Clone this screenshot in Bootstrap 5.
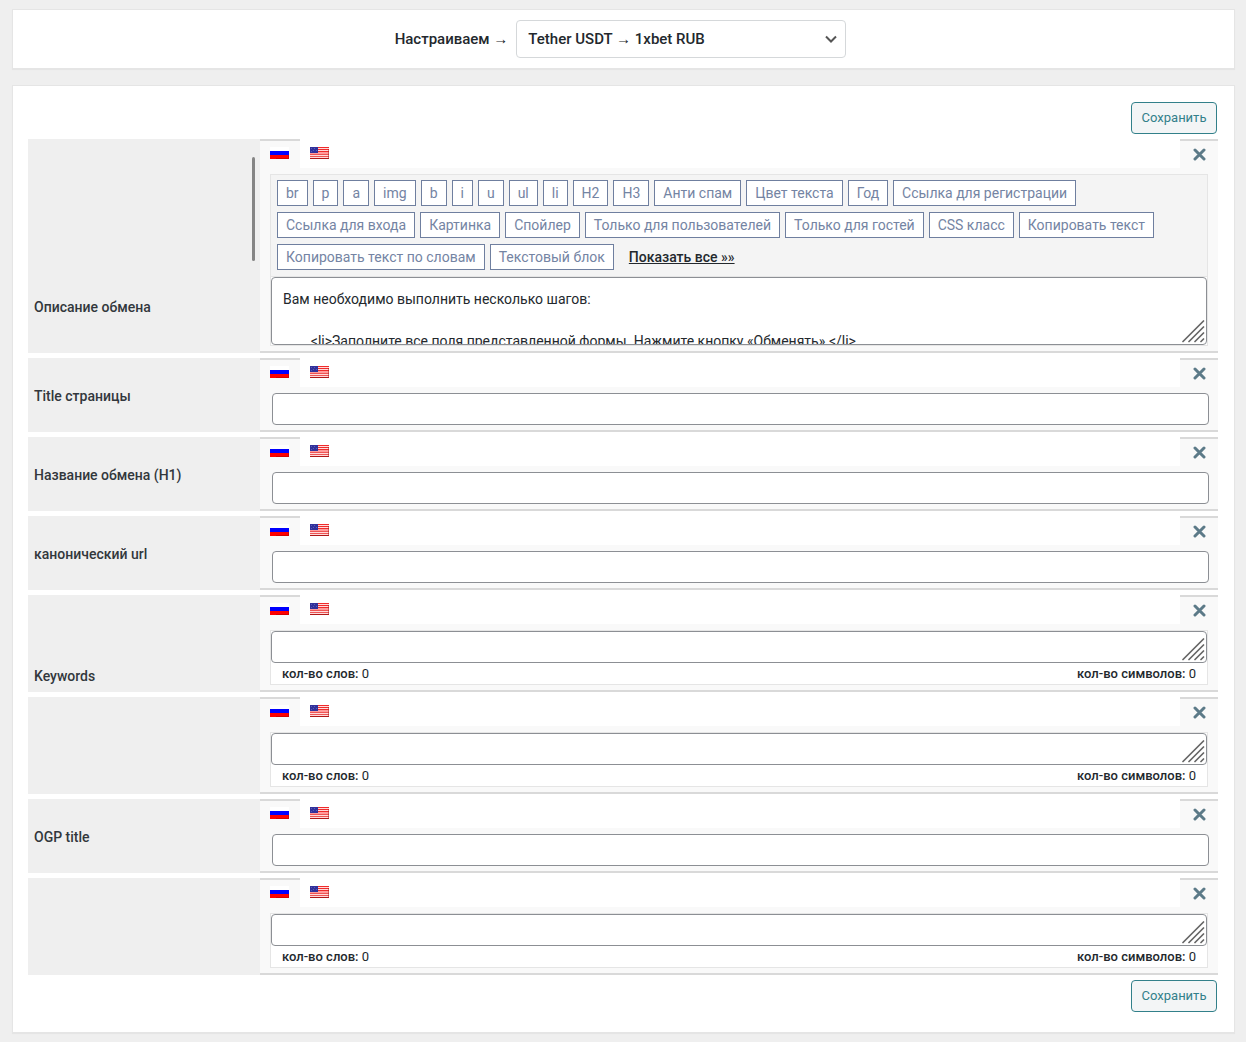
<!DOCTYPE html>
<html lang="ru">
<head>
<meta charset="utf-8">
<meta name="viewport" content="width=device-width, initial-scale=1">
<title>Настройки направления обмена</title>
<link href="https://cdn.jsdelivr.net/npm/bootstrap@5.3.0/dist/css/bootstrap.min.css" rel="stylesheet">
<style>
body{background:#efefef;color:#32373c;font:14px/20px Roboto,"Liberation Sans",sans-serif}
.page-wrap{padding:9px 11px 9px 12px}
.panel{background:#fff;border:1px solid #e5e5e5;box-shadow:0 1px 1px rgba(0,0,0,.04)}
.panel-head{padding:10px 6px 10px 0;margin-bottom:16px}
.panel-main{padding:16px 16px 20px 15px}
.pick-label{font-size:15px;font-weight:500;margin-right:8px;color:#23282d}
.pick-select{width:330px;height:38px;border:1px solid #d5d8da;border-radius:4px;font-size:15px;font-weight:500;padding:0 36px 0 11px;color:#23282d;background-position:right 6px center;background-size:16px 16px;
background-image:url("data:image/svg+xml,%3Csvg xmlns='http://www.w3.org/2000/svg' viewBox='0 0 16 16'%3E%3Cpath d='M3 5.5l5 5 5-5' fill='none' stroke='%23555' stroke-width='2'/%3E%3C/svg%3E")}
.save-bar{padding-right:1px}
.btn-save{height:32px;width:86px;padding:0;font-size:13px;line-height:20px;color:#32808a;border:1px solid #32808a;border-radius:4px;background:#f3f5f6}
.btn-save:hover{color:#1d6670;border-color:#1d6670;background:#eef1f2}
.rows{gap:5px;margin:5px 0}
.side{width:232px;background:#efefef;padding:2px 6px 0;flex:none}
.side label{font-weight:500}
.side-low{padding-bottom:6px}
.side-tall{padding-bottom:36px}
.thumb{position:absolute;right:5px;top:18px;width:3px;height:104px;border-radius:2px;background:#858585}
.main-col{background:#f9f9f9;border-bottom:2px solid #d9d9d9;min-width:0}
.tabs{background:#fff;height:29px}
.tab{width:40px;height:29px;border:0;border-top:2px solid transparent;background:none;padding:6px 0 0 10px;display:flex;align-items:flex-start}
.tab.on,.tab.off{background:#f9f9f9;border-top-color:#d9d9d9}
.tab.off{width:38px;padding:7px 0 0 13px;margin-left:auto}
.inner{padding:6px 10px 5px}
.field{display:block;height:32px;width:auto;border:1px solid #8c8f94;border-radius:4px;background:#fff;padding:0 10px}
.inner>.field{width:calc(100% - 1px);margin-left:2px}
.frame{border:1px solid #e5e5e5;background:#fff}
.frame .field{width:100%;resize:none;overflow:hidden;color:#23282d;line-height:21px;padding:11px 11px 0}
.frame .tall{height:68px}
.grip{position:absolute;right:1px;bottom:2px;pointer-events:none}
.tags{background:#f4f4f4;border-bottom:1px solid #e5e5e5;padding:5px 6px 6px;gap:6px 5px}
.tag{height:26px;border:1px solid #6f7f9f;background:#fff;color:#7484a3;font-size:14px;line-height:20px;padding:0 8px}
.more{color:#23282d;font-weight:500;margin-left:10px;line-height:26px}
.more:hover{color:#32808a}
.counts{height:21px;font-size:13px;line-height:21px;padding:0 11px;color:#23282d}
.counts b{font-weight:500}
</style>
<script src="https://cdn.jsdelivr.net/npm/bootstrap@5.3.0/dist/js/bootstrap.bundle.min.js"></script>
</head>
<body>
<svg width="0" height="0" class="d-none" aria-hidden="true">
<symbol id="ru" viewBox="0 0 19 12"><path fill="#fff" d="M0 0h19v4H0z"/><path fill="#00f" d="M0 4h19v4H0z"/><path fill="#f00" d="M0 8h19v4H0z"/><path fill="#a00" opacity=".5" d="M6 11h13v1H6zM18 8h1v3h-1z"/></symbol>
<symbol id="us" viewBox="0 0 19 12"><path fill="#ff9a9a" d="M0 0h19v12H0z"/><path fill="#ffdada" d="M8 1h11v1H8zM8 3h11v1H8zM0 8h19v1H0zM0 10h19v1H0z"/><path fill="#f02b2b" d="M0 0h19v1H0zM8 2h11v1H8zM8 4h11v1H8z"/><path fill="#ee5555" d="M0 7h19v1H0zM0 9h19v1H0z"/><path fill="#b01818" d="M0 11h19v1H0z"/><path fill="#a01818" opacity=".5" d="M18 2h1v9h-1z"/><path fill="#31319b" d="M0 0h8v6H0z"/><path fill="#5a5ab5" d="M1 1h1v1H1zM4 1h1v1H4zM3 3h1v1H3zM6 3h1v1H6zM1 4h1v1H1z"/></symbol>
<symbol id="x" viewBox="0 0 13 13"><path d="M2 2l9 9M11 2l-9 9" stroke="#5c7a88" stroke-width="3" stroke-linecap="round"/></symbol>
<symbol id="gr" viewBox="0 0 24 24"><path d="M1 22.500L21.500 2M7 22.500L21.500 8M13 22.500L21.500 14M19 22.500L21.500 20" stroke="#666" stroke-width="1.700" stroke-linecap="round"/></symbol>
</svg>
<div class="page-wrap">
<form>
<div class="panel panel-head d-flex justify-content-center align-items-center">
<label class="pick-label" for="dir">Настраиваем →</label>
<select class="form-select pick-select" id="dir"><option>Tether USDT → 1xbet RUB</option></select>
</div>
<div class="panel panel-main">
<div class="save-bar d-flex justify-content-end"><button type="button" class="btn btn-save">Сохранить</button></div>
<div class="rows d-flex flex-column">

<div class="d-flex">
<div class="side side-tall position-relative d-flex align-items-end"><label for="f1">Описание обмена</label><span class="thumb"></span></div>
<div class="main-col flex-grow-1">
<div class="tabs d-flex"><button type="button" class="tab on" aria-label="Русский"><svg width="19" height="12"><use href="#ru"/></svg></button><button type="button" class="tab" aria-label="English"><svg width="19" height="12"><use href="#us"/></svg></button><button type="button" class="tab off" aria-label="Закрыть"><svg width="13" height="13"><use href="#x"/></svg></button></div>
<div class="inner"><div class="frame">
<div class="tags d-flex flex-wrap">
<button type="button" class="tag">br</button><button type="button" class="tag">p</button><button type="button" class="tag">a</button><button type="button" class="tag">img</button><button type="button" class="tag">b</button><button type="button" class="tag">i</button><button type="button" class="tag">u</button><button type="button" class="tag">ul</button><button type="button" class="tag">li</button><button type="button" class="tag">H2</button><button type="button" class="tag">H3</button><button type="button" class="tag">Анти спам</button><button type="button" class="tag">Цвет текста</button><button type="button" class="tag">Год</button><button type="button" class="tag">Ссылка для регистрации</button><button type="button" class="tag">Ссылка для входа</button><button type="button" class="tag">Картинка</button><button type="button" class="tag">Спойлер</button><button type="button" class="tag">Только для пользователей</button><button type="button" class="tag">Только для гостей</button><button type="button" class="tag">CSS класс</button><button type="button" class="tag">Копировать текст</button><button type="button" class="tag">Копировать текст по словам</button><button type="button" class="tag">Текстовый блок</button><a class="more" href="#">Показать все »»</a>
</div>
<div class="position-relative"><textarea class="field tall" id="f1">Вам необходимо выполнить несколько шагов:

&#9;&lt;li&gt;Заполните все поля представленной формы. Нажмите кнопку «Обменять».&lt;/li&gt;</textarea><svg class="grip" width="24" height="24"><use href="#gr"/></svg></div>
</div></div>
</div>
</div>

<div class="d-flex">
<div class="side d-flex align-items-center"><label for="f2">Title страницы</label></div>
<div class="main-col flex-grow-1">
<div class="tabs d-flex"><button type="button" class="tab on" aria-label="Русский"><svg width="19" height="12"><use href="#ru"/></svg></button><button type="button" class="tab" aria-label="English"><svg width="19" height="12"><use href="#us"/></svg></button><button type="button" class="tab off" aria-label="Закрыть"><svg width="13" height="13"><use href="#x"/></svg></button></div>
<div class="inner"><input type="text" class="field" id="f2"></div>
</div>
</div>

<div class="d-flex">
<div class="side d-flex align-items-center"><label for="f3">Название обмена (H1)</label></div>
<div class="main-col flex-grow-1">
<div class="tabs d-flex"><button type="button" class="tab on" aria-label="Русский"><svg width="19" height="12"><use href="#ru"/></svg></button><button type="button" class="tab" aria-label="English"><svg width="19" height="12"><use href="#us"/></svg></button><button type="button" class="tab off" aria-label="Закрыть"><svg width="13" height="13"><use href="#x"/></svg></button></div>
<div class="inner"><input type="text" class="field" id="f3"></div>
</div>
</div>

<div class="d-flex">
<div class="side d-flex align-items-center"><label for="f4">канонический url</label></div>
<div class="main-col flex-grow-1">
<div class="tabs d-flex"><button type="button" class="tab on" aria-label="Русский"><svg width="19" height="12"><use href="#ru"/></svg></button><button type="button" class="tab" aria-label="English"><svg width="19" height="12"><use href="#us"/></svg></button><button type="button" class="tab off" aria-label="Закрыть"><svg width="13" height="13"><use href="#x"/></svg></button></div>
<div class="inner"><input type="text" class="field" id="f4"></div>
</div>
</div>

<div class="d-flex">
<div class="side side-low d-flex align-items-end"><label for="f5">Keywords</label></div>
<div class="main-col flex-grow-1">
<div class="tabs d-flex"><button type="button" class="tab on" aria-label="Русский"><svg width="19" height="12"><use href="#ru"/></svg></button><button type="button" class="tab" aria-label="English"><svg width="19" height="12"><use href="#us"/></svg></button><button type="button" class="tab off" aria-label="Закрыть"><svg width="13" height="13"><use href="#x"/></svg></button></div>
<div class="inner"><div class="frame">
<div class="position-relative"><textarea class="field" id="f5"></textarea><svg class="grip" width="24" height="24"><use href="#gr"/></svg></div>
<div class="counts d-flex justify-content-between"><span><b>кол-во слов:</b> 0</span><span><b>кол-во символов:</b> 0</span></div>
</div></div>
</div>
</div>

<div class="d-flex">
<div class="side"></div>
<div class="main-col flex-grow-1">
<div class="tabs d-flex"><button type="button" class="tab on" aria-label="Русский"><svg width="19" height="12"><use href="#ru"/></svg></button><button type="button" class="tab" aria-label="English"><svg width="19" height="12"><use href="#us"/></svg></button><button type="button" class="tab off" aria-label="Закрыть"><svg width="13" height="13"><use href="#x"/></svg></button></div>
<div class="inner"><div class="frame">
<div class="position-relative"><textarea class="field" aria-label="Описание"></textarea><svg class="grip" width="24" height="24"><use href="#gr"/></svg></div>
<div class="counts d-flex justify-content-between"><span><b>кол-во слов:</b> 0</span><span><b>кол-во символов:</b> 0</span></div>
</div></div>
</div>
</div>

<div class="d-flex">
<div class="side d-flex align-items-center"><label for="f7">OGP title</label></div>
<div class="main-col flex-grow-1">
<div class="tabs d-flex"><button type="button" class="tab on" aria-label="Русский"><svg width="19" height="12"><use href="#ru"/></svg></button><button type="button" class="tab" aria-label="English"><svg width="19" height="12"><use href="#us"/></svg></button><button type="button" class="tab off" aria-label="Закрыть"><svg width="13" height="13"><use href="#x"/></svg></button></div>
<div class="inner"><input type="text" class="field" id="f7"></div>
</div>
</div>

<div class="d-flex">
<div class="side"></div>
<div class="main-col flex-grow-1">
<div class="tabs d-flex"><button type="button" class="tab on" aria-label="Русский"><svg width="19" height="12"><use href="#ru"/></svg></button><button type="button" class="tab" aria-label="English"><svg width="19" height="12"><use href="#us"/></svg></button><button type="button" class="tab off" aria-label="Закрыть"><svg width="13" height="13"><use href="#x"/></svg></button></div>
<div class="inner"><div class="frame">
<div class="position-relative"><textarea class="field" aria-label="OGP описание"></textarea><svg class="grip" width="24" height="24"><use href="#gr"/></svg></div>
<div class="counts d-flex justify-content-between"><span><b>кол-во слов:</b> 0</span><span><b>кол-во символов:</b> 0</span></div>
</div></div>
</div>
</div>

</div>
<div class="save-bar d-flex justify-content-end"><button type="button" class="btn btn-save">Сохранить</button></div>
</div>
</form>
</div>
</body>
</html>
